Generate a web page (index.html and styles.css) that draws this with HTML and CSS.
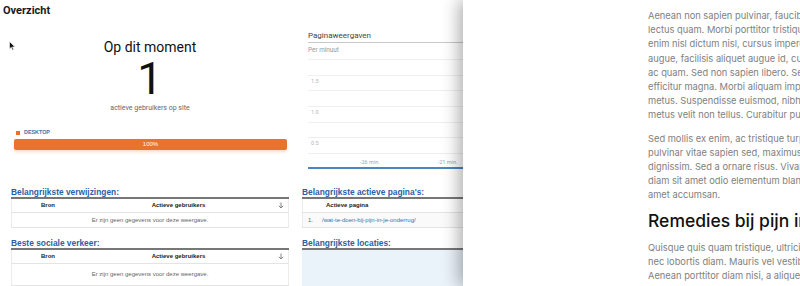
FILE: index.html
```html
<!DOCTYPE html>
<html lang="nl">
<head>
  <meta charset="UTF-8" />
  <title>Realtime overzicht</title>
  <link rel="stylesheet" href="styles.css">
</head>
<body>
<div class="page">

  <section class="ga">
    <svg class="cursor" width="7" height="10" viewBox="0 0 7 10">
      <path d="M0.5 0.5 L0.5 8 L2.3 6.3 L3.6 9.2 L4.7 8.7 L3.5 5.9 L6 5.9 Z" fill="#111" stroke="#fff" stroke-width="0.6"/>
    </svg>

    <!-- row 1 -->
    <div class="summary">
      <h1 class="ga-title">Overzicht</h1>
      <div class="now">
        <div class="now-label">Op dit moment</div>
        <div class="now-count">1</div>
        <div class="now-sub">actieve gebruikers op site</div>
      </div>
      <div class="legend"><span class="swatch"></span>DESKTOP</div>
      <div class="bar">100%</div>
    </div>

    <div class="chart">
      <div class="chart-title">Paginaweergaven</div>
      <div class="chart-sub">Per minuut</div>
      <div class="grid">
        <div class="row"></div>
        <div class="row"><span>1.5</span></div>
        <div class="row"></div>
        <div class="row"><span>1.0</span></div>
        <div class="row"></div>
        <div class="row"><span>0.5</span></div>
        <div class="row axis"><em class="t1">-26 min.</em><em class="t2">-21 min.</em></div>
      </div>
    </div>

    <!-- row 2 -->
    <h2 class="block-title lead">Belangrijkste verwijzingen:</h2>
    <h2 class="block-title lead">Belangrijkste actieve pagina's:</h2>

    <!-- row 3 -->
    <table class="rt">
      <thead>
        <tr><th class="c-src">Bron</th><th class="c-users">Actieve gebruikers</th><th class="c-sort"><svg width="6" height="7" viewBox="0 0 6 7"><path d="M3 0.5 V6 M0.8 3.8 L3 6 L5.2 3.8" fill="none" stroke="#777" stroke-width="0.9"/></svg></th></tr>
      </thead>
      <tbody>
        <tr><td colspan="3" class="empty">Er zijn geen gegevens voor deze weergave.</td></tr>
      </tbody>
    </table>
    <table class="rt pages">
      <thead>
        <tr><th class="c-num"></th><th class="c-page">Actieve pagina</th></tr>
      </thead>
      <tbody>
        <tr><td class="c-num">1.</td><td class="c-page"><a href="#">/wat-te-doen-bij-pijn-in-je-onderrug/</a></td></tr>
      </tbody>
    </table>

    <!-- row 4 -->
    <h2 class="block-title">Beste sociale verkeer:</h2>
    <h2 class="block-title">Belangrijkste locaties:</h2>

    <!-- row 5 -->
    <table class="rt">
      <thead>
        <tr><th class="c-src">Bron</th><th class="c-users">Actieve gebruikers</th><th class="c-sort"><svg width="6" height="7" viewBox="0 0 6 7"><path d="M3 0.5 V6 M0.8 3.8 L3 6 L5.2 3.8" fill="none" stroke="#777" stroke-width="0.9"/></svg></th></tr>
      </thead>
      <tbody>
        <tr><td colspan="3" class="empty">Er zijn geen gegevens voor deze weergave.</td></tr>
      </tbody>
    </table>
    <div class="map"></div>
  </section>

  <article class="post">
    <p>Aenean non sapien pulvinar, faucibus<br>
    lectus quam. Morbi porttitor tristique<br>
    enim nisl dictum nisl, cursus imperdiet<br>
    augue, facilisis aliquet augue id, cursus<br>
    ac quam. Sed non sapien libero. Sed<br>
    efficitur magna. Morbi aliquam imperdiet<br>
    metus. Suspendisse euismod, nibh<br>
    metus velit non tellus. Curabitur pulvinar</p>

    <p>Sed mollis ex enim, ac tristique turpis<br>
    pulvinar vitae sapien sed, maximus<br>
    dignissim. Sed a ornare risus. Vivamus<br>
    diam sit amet odio elementum blandit<br>
    amet accumsan.</p>

    <h2>Remedies bij pijn in je onderrug</h2>

    <p>Quisque quis quam tristique, ultricies<br>
    nec lobortis diam. Mauris vel vestibulum<br>
    Aenean porttitor diam nisi, a aliquet</p>
  </article>

</div>
</body>
</html>
```

FILE: styles.css
```css
body {
  margin: 0;
  width: 800px;
  height: 286px;
  overflow: hidden;
  background: #fff;
  font-family: Roboto, "Liberation Sans", sans-serif;
}
.page {
  display: flex;
  height: 286px;
}

/* analytics panel: two columns, rows shared so headings line up */
.ga {
  position: relative;
  width: 463px;
  flex: none;
  box-sizing: border-box;
  padding-left: 11px;
  display: grid;
  grid-template-columns: 278px 200px;
  grid-template-rows: auto auto auto auto 1fr;
  column-gap: 13px;
  align-content: start;
  overflow: hidden;
  background: #fff;
}
.cursor {
  position: absolute;
  left: 9px;
  top: 41px;
}
.ga-title {
  margin: 0 0 0 -8px;
  padding-top: 4px;
  font-size: 11px;
  line-height: 13px;
  font-weight: 700;
  color: #1a1a1a;
}
.now {
  text-align: center;
  margin-top: 22px;
  color: #111;
}
.now-label {
  font-size: 14px;
  line-height: 16px;
}
.now-count {
  margin-top: 1px;
  font-size: 45px;
  line-height: 46px;
  font-weight: 400;
}
.now-sub {
  margin-top: 2px;
  font-size: 7px;
  line-height: 9px;
  color: #666;
}
.legend {
  display: flex;
  align-items: center;
  margin: 16px 0 0 5px;
  font-family: "Liberation Sans", Arial, sans-serif;
  font-size: 5.4px;
  line-height: 7px;
  font-weight: 700;
  color: #3e6fae;
}
.swatch {
  width: 4px;
  height: 4px;
  margin-right: 4px;
  background: #e8712c;
}
.bar {
  margin: 3px 2px 0 3px;
  height: 11px;
  border-radius: 2px;
  background: #e8722e;
  box-shadow: 0 2px 3px rgba(232, 114, 46, 0.25);
  color: #fff;
  text-align: center;
  font-family: "Liberation Sans", Arial, sans-serif;
  font-size: 6px;
  line-height: 11px;
}

.block-title {
  margin: 10px 0 0;
  font-family: "Liberation Sans", Arial, sans-serif;
  font-size: 8.4px;
  line-height: 10px;
  font-weight: 700;
  color: #2b5fa5;
}
.block-title.lead {
  margin-top: 18px;
}
.rt {
  width: 100%;
  border-collapse: collapse;
  border-top: 2px solid #777;
  font-family: "Liberation Sans", Arial, sans-serif;
  font-size: 6px;
}
.rt th {
  height: 13px;
  padding: 0;
  font-weight: 700;
  color: #222;
  border-bottom: 1px solid #e4e4e4;
}
.rt td {
  height: 14px;
  padding: 0;
  color: #666;
  border-bottom: 1px solid #e4e4e4;
}
.rt tr > :first-child { border-left: 1px solid #ececec; }
.rt tr > :last-child { border-right: 1px solid #ececec; }
.c-src { width: 72px; }
.c-sort { width: 15px; }
.c-sort svg { display: block; margin: 0 auto; }
.empty { text-align: center; }

/* chart */
.chart {
  margin-left: 6px;
  padding-top: 30px;
}
.chart-title {
  font-size: 8px;
  line-height: 12px;
  color: #444;
  border-bottom: 1.5px solid #c8c8c8;
}
.chart-sub {
  margin-top: 3px;
  font-size: 6.4px;
  line-height: 8px;
  color: #999;
}
.grid {
  margin-top: 5px;
}
.grid .row {
  box-sizing: border-box;
  height: 15.67px;
  border-top: 1px solid #efefef;
  padding: 2px 0 0 3px;
  font-size: 5.5px;
  line-height: 6px;
  color: #b5b5b5;
}
.grid .row.axis {
  display: flex;
  align-items: flex-end;
  padding: 0 0 2px;
  border-bottom: 2px solid #4a85c4;
}
.axis em {
  font-style: normal;
  font-size: 5.5px;
  color: #8fa8c6;
}
.axis .t1 { margin-left: 52px; }
.axis .t2 { margin-left: 58px; }

.pages th { text-align: left; }
.pages .c-num { width: 12px; padding-left: 5px; text-align: left; }
.pages th.c-page { padding-left: 6px; }
.pages td.c-page { padding-left: 2px; }
.pages tbody tr { background: #fafafa; }
.pages a {
  color: #3e6fae;
  text-decoration: none;
}
.map {
  border-top: 2px solid #777;
  background: #eaf2fa;
}

/* article sheet */
.post {
  flex: 1;
  min-width: 0;
  position: relative;
  padding: 9px 0 0 185px;
  background: #fff;
  box-shadow: -4px 0 16px rgba(0, 0, 0, 0.32);
  font-family: Inter, "Open Sans", sans-serif;
  white-space: nowrap;
  overflow: hidden;
}
.post p {
  margin: 0 0 9px;
  font-size: 9.3px;
  line-height: 14.2px;
  color: #808080;
}
.post h2 {
  margin: -2px 0 9px;
  font-size: 17.5px;
  line-height: 22px;
  font-weight: 500;
  color: #111;
}
```
